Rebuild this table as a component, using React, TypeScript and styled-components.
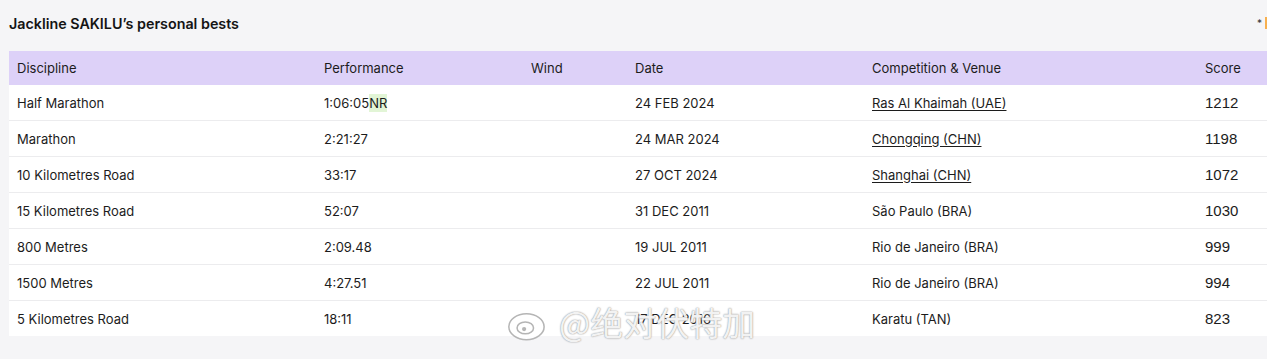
import styled, { createGlobalStyle } from "styled-components";

const GlobalStyle = createGlobalStyle`
  body {
    margin: 0;
    background: #f5f5f7;
    font-family: Inter, "Noto Sans", sans-serif;
    color: #1c1c1c;
  }
`;

type Best = {
  discipline: string;
  performance: string;
  record?: string;
  wind?: string;
  date: string;
  venue: string;
  link?: boolean;
  score: number;
};

const bests: Best[] = [
  { discipline: "Half Marathon", performance: "1:06:05", record: "NR", date: "24 FEB 2024", venue: "Ras Al Khaimah (UAE)", link: true, score: 1212 },
  { discipline: "Marathon", performance: "2:21:27", date: "24 MAR 2024", venue: "Chongqing (CHN)", link: true, score: 1198 },
  { discipline: "10 Kilometres Road", performance: "33:17", date: "27 OCT 2024", venue: "Shanghai (CHN)", link: true, score: 1072 },
  { discipline: "15 Kilometres Road", performance: "52:07", date: "31 DEC 2011", venue: "São Paulo (BRA)", score: 1030 },
  { discipline: "800 Metres", performance: "2:09.48", date: "19 JUL 2011", venue: "Rio de Janeiro (BRA)", score: 999 },
  { discipline: "1500 Metres", performance: "4:27.51", date: "22 JUL 2011", venue: "Rio de Janeiro (BRA)", score: 994 },
  { discipline: "5 Kilometres Road", performance: "18:11", date: "17 DEC 2016", venue: "Karatu (TAN)", score: 823 },
];

const App = () => {
  return (
    <>
      <GlobalStyle />
      <Page>
        <TitleBar>
          <Title>Jackline SAKILU’s personal bests</Title>
          <Legend>
            <span>*</span>
            <LegendMark />
          </Legend>
        </TitleBar>
        <Table>
          <colgroup>
            <col style={{ width: 307 }} />
            <col style={{ width: 207 }} />
            <col style={{ width: 104 }} />
            <col style={{ width: 237 }} />
            <col style={{ width: 333 }} />
            <col />
          </colgroup>
          <thead>
            <tr>
              <Th>Discipline</Th>
              <Th>Performance</Th>
              <Th>Wind</Th>
              <Th>Date</Th>
              <Th>Competition &amp; Venue</Th>
              <Th>Score</Th>
            </tr>
          </thead>
          <tbody>
            {bests.map((b) => (
              <Row key={b.discipline}>
                <Td>{b.discipline}</Td>
                <Td>
                  {b.performance}
                  {b.record && <Record>{b.record}</Record>}
                </Td>
                <Td>{b.wind ?? ""}</Td>
                <Td>{b.date}</Td>
                <Td>{b.link ? <VenueLink href="#">{b.venue}</VenueLink> : b.venue}</Td>
                <ScoreCell>{b.score}</ScoreCell>
              </Row>
            ))}
          </tbody>
        </Table>
        <Watermark>
          <svg width="50" height="40" viewBox="0 0 40 34">
            <ellipse cx="17" cy="21" rx="15" ry="11" fill="rgba(255,255,255,0.9)" stroke="#b5b5b5" strokeWidth="1.3" />
            <ellipse cx="16" cy="22" rx="7" ry="5" fill="none" stroke="#b5b5b5" strokeWidth="1.3" />
            <circle cx="15" cy="23" r="1.8" fill="#b5b5b5" />
            <path d="M27 4 a10 10 0 0 1 10 10" fill="none" stroke="#fff" strokeWidth="3" />
            <path d="M26 9.5 a5 5 0 0 1 5.5 5" fill="none" stroke="#fff" strokeWidth="2.5" />
          </svg>
          <span>@绝对伏特加</span>
        </Watermark>
      </Page>
    </>
  );
};

const Page = styled.div`
  position: relative;
  height: 359px;
  padding-left: 9px;
  overflow: hidden;
`;

const TitleBar = styled.div`
  display: flex;
  align-items: center;
  justify-content: space-between;
  height: 44px;
  padding-top: 1px;
  margin-bottom: 6px;
`;

const Title = styled.h2`
  margin: 0;
  font-size: 14.3px;
  font-weight: 600;
  color: #141414;
`;

const Legend = styled.div`
  display: flex;
  align-items: center;
  gap: 3px;
  margin-right: -4px;
  font-size: 10px;
  color: #333;
`;

const LegendMark = styled.span`
  display: inline-block;
  width: 6px;
  height: 12px;
  background: #f7b050;
`;

const Table = styled.table`
  width: 100%;
  border-collapse: collapse;
  table-layout: fixed;
  background: #fff;
  font-size: 13px;
`;

const Th = styled.th`
  height: 34px;
  padding: 0 8px;
  text-align: left;
  font-weight: 400;
  color: #1c1c1c;
  background: #ddd1f8;
`;

const Row = styled.tr`
  border-bottom: 1px solid #ececee;
  &:last-child {
    border-bottom: none;
  }
`;

const Td = styled.td`
  height: 35px;
  padding: 0 8px;
  white-space: nowrap;
  color: #1c1c1c;
`;

const ScoreCell = styled(Td)`
  font-family: "Liberation Sans", Arial, sans-serif;
  font-size: 15px;
`;

const Record = styled.span`
  background: #e2f5d6;
  padding: 1px 0;
`;

const VenueLink = styled.a`
  color: #1c1c1c;
  text-decoration: underline;
  text-underline-offset: 2px;
`;

const Watermark = styled.div`
  position: absolute;
  left: 505px;
  top: 302px;
  display: flex;
  align-items: center;
  gap: 4px;
  pointer-events: none;
  font-family: "Noto Sans CJK SC", sans-serif;
  font-size: 33px;
  line-height: 1;
  color: rgba(255, 255, 255, 0.88);
  text-shadow: 0 0 1px #9a9a9a, 0 0 2px #b0b0b0;
`;

export default App;
